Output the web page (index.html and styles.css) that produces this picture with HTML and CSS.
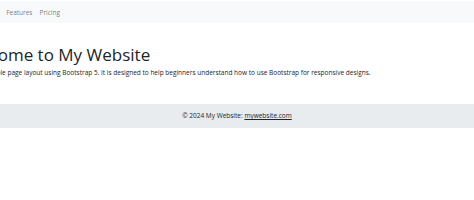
FILE: index.html
```html
<!DOCTYPE html>
<html>
<head>
	<title>My Website</title>
	<link rel="stylesheet" href="styles.css">
</head>
<body>
	<!-- 导航 -->
	<nav class="navbar">
		<div class="navbar-inner">
			<a class="brand">My Website</a>
			<ul class="nav-links">
				<li><a class="nav-link">Features</a></li>
				<li><a class="nav-link">Pricing</a></li>
			</ul>
		</div>
	</nav>
	<!-- 内容 -->
	<main class="main">
		<div class="container">
			<h1 class="title">Welcome to My Website</h1>
			<p class="lead-text">This is a simple page layout using Bootstrap 5. It is designed to help beginners understand how to use Bootstrap for responsive designs.</p>
		</div>
	</main>
	<!-- 底部 -->
	<footer class="footer">
		<p>© 2024 My Website: <a class="footer-link">mywebsite.com</a></p>
	</footer>
</body>
</html>
```

FILE: styles.css
```css
*{
	margin: 0;
	padding: 0;
	box-sizing: border-box;
}
html{
	overflow-x: hidden;
}
body{
	font-family: "Open Sans", "Liberation Sans", sans-serif;
	font-size: 6.5px;
	color: #212529;
	background: #fff;
	padding-top: 1px;
}

.navbar{
	background: #f8f9fa;
	height: 22px;
	display: flex;
	justify-content: center;
}
.navbar-inner{
	flex: 0 0 626px;
	display: flex;
	align-items: center;
}
.brand{
	font-size: 9px;
	margin-right: 30px;
	color: rgba(0,0,0,.9);
}
.nav-links{
	display: flex;
	list-style: none;
}
.nav-link{
	display: block;
	padding: 0 3.5px;
	color: rgba(0,0,0,.55);
}

.main{
	display: flex;
	justify-content: center;
	padding-top: 22px;
}
.container{
	flex: 0 0 554px;
}
.title{
	font-size: 17px;
	font-weight: 500;
	line-height: 1.2;
	margin-bottom: 3px;
}
.lead-text{
	line-height: 1.5;
	white-space: nowrap;
	margin-bottom: 5px;
}

.footer{
	margin-top: 21px;
	background: #e9ecef;
	padding: 7px 0;
	text-align: center;
	line-height: 1.5;
}
.footer-link{
	color: #212529;
	text-decoration: underline;
}
```
